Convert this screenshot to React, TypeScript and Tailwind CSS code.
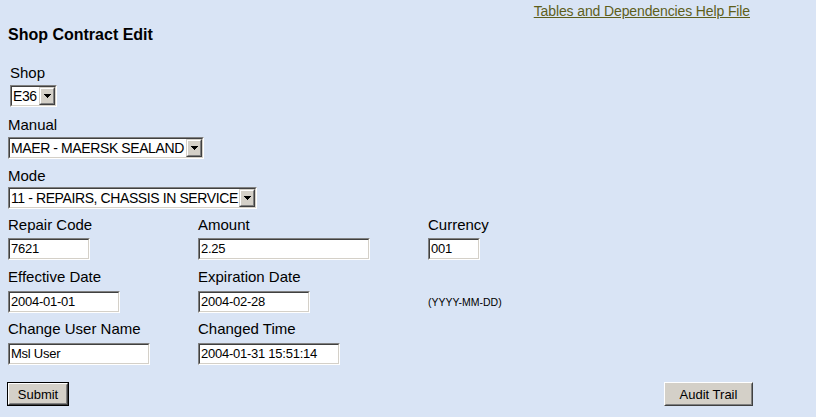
import React from "react";

function Sunken({ className, children }: { className: string; children: React.ReactNode }) {
  return (
    <div className={`border border-t-[#808080] border-l-[#808080] border-b-white border-r-white ${className}`}>
      <div className="flex h-full w-full items-stretch border border-t-[#404040] border-l-[#404040] border-b-[#d4d0c8] border-r-[#d4d0c8] bg-white">
        {children}
      </div>
    </div>
  );
}

function Select({ text, className }: { text: string; className: string }) {
  return (
    <Sunken className={`h-[22px] ${className}`}>
      <span className="flex flex-1 items-center overflow-hidden whitespace-nowrap pl-[1px] text-[14px] leading-[18px] tracking-[-0.4px]">
        {text}
      </span>
      <span className="flex w-[16px] items-center justify-center border border-t-[#d4d0c8] border-l-[#d4d0c8] border-b-[#404040] border-r-[#404040] bg-[#d4d0c8]">
        <span className="flex h-full w-full items-center justify-center border border-t-white border-l-white border-b-[#808080] border-r-[#808080]">
          <svg width="7" height="4" viewBox="0 0 7 4" shapeRendering="crispEdges">
            <path d="M0 0h7v1h-1v1h-1v1h-1v1h-1v-1h-1v-1h-1v-1h-1z" fill="#000" />
          </svg>
        </span>
      </span>
    </Sunken>
  );
}

function Input({ value, className }: { value: string; className: string }) {
  return (
    <Sunken className={`h-[22px] ${className}`}>
      <span className="flex flex-1 items-center overflow-hidden whitespace-nowrap pl-[1px] text-[13px] leading-[16px] tracking-[-0.25px]">
        {value}
      </span>
    </Sunken>
  );
}

function Label({ children }: { children: React.ReactNode }) {
  return <div className="text-[15px] leading-[18px] whitespace-nowrap">{children}</div>;
}

export default function App() {
  return (
    <div className="min-h-[417px] w-full bg-[#d9e4f5] font-['Liberation_Sans',Arial,sans-serif] text-black">
      <div className="flex justify-end pr-[66px] pt-[3px]">
        <a className="text-[14px] leading-[16px] tracking-[-0.12px] text-[#5e5e1b] underline" href="#">
          Tables and Dependencies Help File
        </a>
      </div>
      <div className="pl-[8px]">
        <h1 className="mt-[7px] text-[16px] font-bold leading-[18px]">Shop Contract Edit</h1>

        <div className="mt-[20px] pl-[2px]">
          <Label>Shop</Label>
          <Select text="E36" className="mt-[3px] w-[47px]" />
        </div>

        <div className="mt-[9px]">
          <Label>Manual</Label>
          <Select text="MAER - MAERSK SEALAND" className="mt-[3px] w-[196px]" />
        </div>

        <div className="mt-[8px]">
          <Label>Mode</Label>
          <Select text="11 - REPAIRS, CHASSIS IN SERVICE" className="mt-[2px] w-[249px]" />
        </div>

        <div className="mt-[7px] grid grid-cols-[190px_230px_1fr]">
          <Label>Repair Code</Label>
          <Label>Amount</Label>
          <Label>Currency</Label>
        </div>
        <div className="mt-[4px] grid grid-cols-[190px_230px_1fr] items-center">
          <Input value="7621" className="w-[82px]" />
          <Input value="2.25" className="w-[172px]" />
          <Input value="001" className="w-[52px]" />
        </div>

        <div className="mt-[8px] grid grid-cols-[190px_230px_1fr]">
          <Label>Effective Date</Label>
          <Label>Expiration Date</Label>
          <div />
        </div>
        <div className="mt-[5px] grid grid-cols-[190px_230px_1fr] items-center">
          <Input value="2004-01-01" className="w-[112px]" />
          <Input value="2004-02-28" className="w-[112px]" />
          <div className="text-[10.5px] leading-[12px]">(YYYY-MM-DD)</div>
        </div>

        <div className="mt-[7px] grid grid-cols-[190px_230px_1fr]">
          <Label>Change User Name</Label>
          <Label>Changed Time</Label>
          <div />
        </div>
        <div className="mt-[5px] grid grid-cols-[190px_230px_1fr] items-center">
          <Input value="Msl User" className="w-[142px]" />
          <Input value="2004-01-31 15:51:14" className="w-[142px]" />
          <div />
        </div>

        <div className="mt-[17px] flex items-center justify-between pr-[63px]">
          <div className="-ml-[1px] h-[24px] w-[62px] border border-black">
            <div className="h-full w-full border border-t-white border-l-white border-b-[#404040] border-r-[#404040] bg-[#d4d0c8]">
              <div className="flex h-full w-full items-center justify-center border border-t-[#d4d0c8] border-l-[#d4d0c8] border-b-[#808080] border-r-[#808080] text-[13px] leading-[15px]">
                Submit
              </div>
            </div>
          </div>
          <div className="h-[24px] w-[89px] border border-t-white border-l-white border-b-[#404040] border-r-[#404040] bg-[#d4d0c8]">
            <div className="flex h-full w-full items-center justify-center border border-t-[#d4d0c8] border-l-[#d4d0c8] border-b-[#808080] border-r-[#808080] text-[13px] leading-[15px]">
              Audit Trail
            </div>
          </div>
        </div>
      </div>
    </div>
  );
}
